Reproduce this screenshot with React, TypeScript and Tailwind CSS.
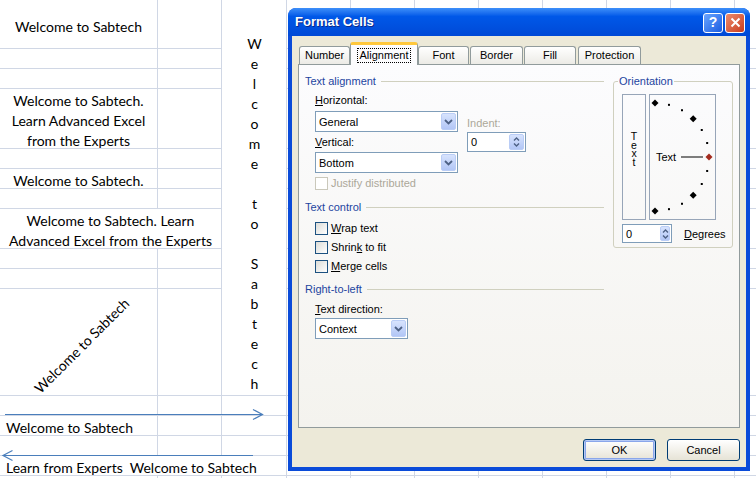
import clsx from 'clsx';

const cell = 'border-r border-b border-[#d0d7e5]';
const stacked = ['W', 'e', 'l', 'c', 'o', 'm', 'e', '', 't', 'o', '', 'S', 'a', 'b', 't', 'e', 'c', 'h'];

function Fillers() {
  return (
    <>
      {Array.from({ length: 8 }).map((_, i) => (
        <div key={i} className={cell} />
      ))}
    </>
  );
}

function Sheet() {
  const rows: React.ReactNode[] = [];
  for (let r = 0; r < 16; r++) {
    let a: React.ReactNode = <div className={cell} />;
    let b: React.ReactNode = <div className={cell} />;
    let c: React.ReactNode = r > 10 ? <div className={cell} /> : null;

    if (r === 0) {
      a = <div className={clsx(cell, 'flex items-center justify-center pt-[4px]')}>Welcome to Sabtech</div>;
      c = (
        <div className={clsx(cell, 'row-span-11 flex flex-col items-center justify-end pb-[1px] pl-[1px]')}>
          {stacked.map((ch, i) => (
            <div key={i} className="h-[20px] leading-[20px]">{ch}</div>
          ))}
        </div>
      );
    }
    if (r === 3) {
      a = (
        <div className={clsx(cell, 'flex items-center justify-center text-center leading-[20px] pt-[4px]')}>
          Welcome to Sabtech.<br />Learn Advanced Excel<br />from the Experts
        </div>
      );
    }
    if (r === 5) {
      a = <div className={clsx(cell, 'flex items-center justify-center pt-[4px]')}>Welcome to Sabtech.</div>;
    }
    if (r === 7) {
      a = (
        <div className={clsx(cell, 'col-span-2 flex items-center justify-center text-center leading-[20px] pt-[4px]')}>
          Welcome to Sabtech. Learn<br />Advanced Excel from the Experts
        </div>
      );
      b = null;
    }
    if (r === 10) {
      a = (
        <div className={clsx(cell, 'flex items-center justify-center')}>
          <span className="-rotate-45 translate-x-[3px] translate-y-[3px] whitespace-nowrap">Welcome to Sabtech</span>
        </div>
      );
    }
    if (r === 12) {
      a = <div className={clsx(cell, 'flex items-center pl-[6px] pt-[4px] whitespace-nowrap')}>Welcome to Sabtech</div>;
    }
    if (r === 14) {
      a = (
        <div className={clsx(cell, 'col-span-3 flex items-center pl-[6px] pt-[4px] whitespace-pre')}>
          Learn from Experts  Welcome to Sabtech
        </div>
      );
      b = null;
      c = null;
    }
    rows.push(
      <div key={r} className="contents">
        {a}
        {b}
        {c}
        <Fillers />
      </div>
    );
  }

  return (
    <div className="grid grid-cols-[158px_64px_65px_repeat(8,64px)] grid-rows-[49px_20px_20px_60px_20px_20px_20px_40px_20px_20px_107px_20px_20px_20px_20px_20px] font-[family-name:Lato,'Liberation_Sans',sans-serif] text-[14px] text-black">
      {rows}
    </div>
  );
}

function Arrows() {
  return (
    <svg className="absolute left-0 top-0 pointer-events-none" width="290" height="478">
      <g fill="none" stroke="#4a7ebb" strokeWidth="1.2">
        <line x1="5" y1="414.5" x2="262" y2="414.5" />
        <polyline points="253,409.5 262.5,414.5 253,419.5" />
        <line x1="3" y1="455.5" x2="253" y2="455.5" />
        <polyline points="12.5,450.5 3,455.5 12.5,460.5" />
      </g>
    </svg>
  );
}

function Chevron() {
  return (
    <svg width="9" height="6" viewBox="0 0 9 6">
      <path d="M1 1l3.5 3.5L8 1" fill="none" stroke="#4d6185" strokeWidth="1.8" />
    </svg>
  );
}

function Select({ value, className }: { value: string; className?: string }) {
  return (
    <div className={clsx('h-[21px] border border-[#7f9db9] bg-white flex items-center', className)}>
      <span className="flex-1 pl-[3px]">{value}</span>
      <div className="w-[15px] h-[17px] mr-[1px] rounded-[2px] border border-[#bacdf6] bg-linear-to-b from-[#d7e3fd] to-[#b2c6f6] flex items-center justify-center">
        <Chevron />
      </div>
    </div>
  );
}

function Spinner({ className, btn }: { className?: string; btn: string }) {
  return (
    <div className={clsx('border border-[#7f9db9] bg-white flex items-center', className)}>
      <span className="flex-1 pl-[3px]">0</span>
      <div className={clsx('h-[calc(100%-2px)] mr-[1px] rounded-[2px] border border-[#bacdf6] bg-linear-to-b from-[#d7e3fd] to-[#b2c6f6] flex flex-col items-center justify-center gap-[2px]', btn)}>
        <svg width="7" height="4" viewBox="0 0 7 4">
          <path d="M1 3.5l2.5-2.5L6 3.5" fill="none" stroke="#4d6185" strokeWidth="1.4" />
        </svg>
        <svg width="7" height="4" viewBox="0 0 7 4">
          <path d="M1 0.5l2.5 2.5L6 0.5" fill="none" stroke="#4d6185" strokeWidth="1.4" />
        </svg>
      </div>
    </div>
  );
}

function Check({ disabled }: { disabled?: boolean }) {
  return (
    <span
      className={clsx(
        'w-[13px] h-[13px] border shrink-0',
        disabled ? 'border-[#cac8bb] bg-white' : 'border-[#1c5180] bg-linear-to-br from-[#dcdcd7] to-white'
      )}
    />
  );
}

function GroupHeader({ children, className }: { children: React.ReactNode; className?: string }) {
  return (
    <div className={clsx('flex items-center h-[14px] text-[#1d45a0]', className)}>
      <span>{children}</span>
      <div className="flex-1 h-px bg-[#d0d0bf] ml-[5px]" />
    </div>
  );
}

function Dial() {
  const pts: { x: number; y: number; kind: 'd' | 'r' | 'p' }[] = [];
  for (let a = 90; a >= -90; a -= 15) {
    const rad = (a * Math.PI) / 180;
    const kind = a === 0 ? 'r' : a % 45 === 0 ? 'd' : 'p';
    pts.push({ x: 5 + 54 * Math.cos(rad), y: 62 - 54 * Math.sin(rad), kind });
  }
  return (
    <svg width="65" height="124" viewBox="0 0 65 124">
      {pts.map((p, i) =>
        p.kind === 'p' ? (
          <rect key={i} x={p.x - 1} y={p.y - 1} width="2" height="2" fill="#000" />
        ) : (
          <polygon
            key={i}
            points={`${p.x},${p.y - 3.5} ${p.x + 3.5},${p.y} ${p.x},${p.y + 3.5} ${p.x - 3.5},${p.y}`}
            fill={p.kind === 'r' ? '#a32b1e' : '#000'}
          />
        )
      )}
      <text x="6" y="66" fontSize="11" fontFamily="'Liberation Sans', Arial, sans-serif" fill="#000">Text</text>
      <line x1="31" y1="62" x2="53" y2="62" stroke="#000" strokeWidth="1" />
    </svg>
  );
}

function Tab({ label }: { label: string }) {
  return (
    <div className="h-[18px] border border-b-0 border-[#919b9c] rounded-t-[3px] bg-linear-to-b from-white to-[#ecebe6] flex items-center justify-center w-full">
      {label}
    </div>
  );
}

function Dialog() {
  return (
    <div className="absolute left-[288px] top-[8px] w-[462px] h-[463px] rounded-t-[8px] bg-[#0a4bd9] flex flex-col font-[family-name:'Liberation_Sans',Arial,sans-serif] text-[11px] text-black">
      {/* title bar */}
      <div className="h-[28px] rounded-t-[8px] bg-linear-to-b from-[#3d8ff9] via-[#0058e8] via-30% to-[#0049d6] flex items-center justify-between pl-[7px] pr-[5px]">
        <span className="text-white font-bold text-[13px] [text-shadow:1px_1px_0_#0b2a8a]">Format Cells</span>
        <div className="flex gap-[2px] mt-[1px]">
          <div className="w-[20px] h-[20px] rounded-[3px] border border-white bg-linear-to-br from-[#6aa5ff] to-[#1a5be0] text-white font-bold text-[14px] flex items-center justify-center">
            ?
          </div>
          <div className="w-[20px] h-[20px] rounded-[3px] border border-white bg-linear-to-br from-[#ec8b6c] to-[#c83a1b] flex items-center justify-center">
            <svg width="11" height="11" viewBox="0 0 11 11">
              <path d="M1.5 1.5l8 8M9.5 1.5l-8 8" stroke="#fff" strokeWidth="2" />
            </svg>
          </div>
        </div>
      </div>

      {/* body */}
      <div className="flex-1 mx-[4px] mb-[4px] bg-[#ece9d8] flex flex-col pt-[6px] px-[6px]">
        {/* tabs */}
        <div className="flex items-end h-[22px] pl-[1px]">
          <div className="w-[51px]"><Tab label="Number" /></div>
          <div className="relative z-10 -mb-px w-[68px] h-[23px] border border-b-0 border-[#919b9c] border-t-[3px] border-t-[#ffc83c] rounded-t-[3px] bg-[#fcfcfe] flex items-center justify-center">
            <span className="border border-dotted border-black px-[2px] leading-[13px]">Alignment</span>
          </div>
          <div className="w-[51px]"><Tab label="Font" /></div>
          <div className="ml-[1px] w-[53px]"><Tab label="Border" /></div>
          <div className="ml-[1px] w-[52px]"><Tab label="Fill" /></div>
          <div className="ml-[2px] w-[63px]"><Tab label="Protection" /></div>
        </div>

        {/* panel */}
        <div className="h-[364px] border border-[#919b9c] bg-linear-to-b from-[#fcfcfe] to-[#f4f3ee] flex pl-[6px] pt-[9px]">
          <div className="w-[299px] flex flex-col leading-[14px]">
            <GroupHeader>Text alignment</GroupHeader>
            <div className="flex pl-[10px] mt-[5px]">
              <div className="flex flex-col w-[143px]">
                <div className="h-[14px]"><span className="underline">H</span>orizontal:</div>
                <Select className="mt-[4px]" value="General" />
                <div className="mt-[3px] h-[14px]"><span className="underline">V</span>ertical:</div>
                <Select className="mt-[3px]" value="Bottom" />
              </div>
              <div className="flex flex-col ml-[9px] w-[59px]">
                <div className="mt-[23px] h-[14px] text-[#aca899]">Indent:</div>
                <Spinner className="mt-[2px] h-[20px]" btn="w-[15px]" />
              </div>
            </div>
            <div className="flex items-center gap-[3px] pl-[10px] mt-[3px] h-[14px] text-[#aca899]">
              <Check disabled />
              <span>Justify distributed</span>
            </div>

            <GroupHeader className="mt-[10px]">Text control</GroupHeader>
            <div className="flex items-center gap-[3px] pl-[10px] mt-[7px] h-[14px]">
              <Check />
              <span><span className="underline">W</span>rap text</span>
            </div>
            <div className="flex items-center gap-[3px] pl-[10px] mt-[5px] h-[14px]">
              <Check />
              <span>Shrin<span className="underline">k</span> to fit</span>
            </div>
            <div className="flex items-center gap-[3px] pl-[10px] mt-[5px] h-[14px]">
              <Check />
              <span><span className="underline">M</span>erge cells</span>
            </div>

            <GroupHeader className="mt-[9px]">Right-to-left</GroupHeader>
            <div className="pl-[10px] mt-[6px] h-[14px]"><span className="underline">T</span>ext direction:</div>
            <Select className="ml-[10px] mt-[2px] w-[93px]" value="Context" />
          </div>

          {/* orientation */}
          <fieldset className="ml-[9px] w-[120px] h-[174px] border border-[#d0d0bf] rounded-[3px] leading-[14px]">
            <legend className="ml-[4px] px-[1px] text-[#1d45a0]">Orientation</legend>
            <div className="pl-[8px] pt-[6px]">
              <div className="flex gap-[3px]">
                <div className="w-[24px] h-[126px] border border-[#97a5b8] flex flex-col items-center pt-[37px] text-[10.5px] leading-[8.5px]">
                  <span>T</span>
                  <span>e</span>
                  <span>x</span>
                  <span>t</span>
                </div>
                <div className="w-[67px] h-[126px] border border-[#97a5b8]">
                  <Dial />
                </div>
              </div>
              <div className="flex items-center mt-[4px]">
                <Spinner className="w-[50px] h-[19px]" btn="w-[10px]" />
                <span className="ml-[12px]"><span className="underline">D</span>egrees</span>
              </div>
            </div>
          </fieldset>
        </div>

        {/* buttons */}
        <div className="flex justify-end gap-[11px] mt-[11px]">
          <div className="w-[73px] h-[22px] rounded-[3px] border border-[#003c74] bg-linear-to-b from-white to-[#e6e3d6] shadow-[inset_0_0_0_1px_#b5c9f5,inset_0_0_0_2px_#8aa6ea] flex items-center justify-center">
            OK
          </div>
          <div className="w-[73px] h-[22px] rounded-[3px] border border-[#003c74] bg-linear-to-b from-white to-[#e6e3d6] flex items-center justify-center">
            Cancel
          </div>
        </div>
      </div>
    </div>
  );
}

export default function App() {
  return (
    <div className="relative w-[756px] h-[478px] overflow-hidden bg-white">
      <Sheet />
      <Arrows />
      <Dialog />
    </div>
  );
}
